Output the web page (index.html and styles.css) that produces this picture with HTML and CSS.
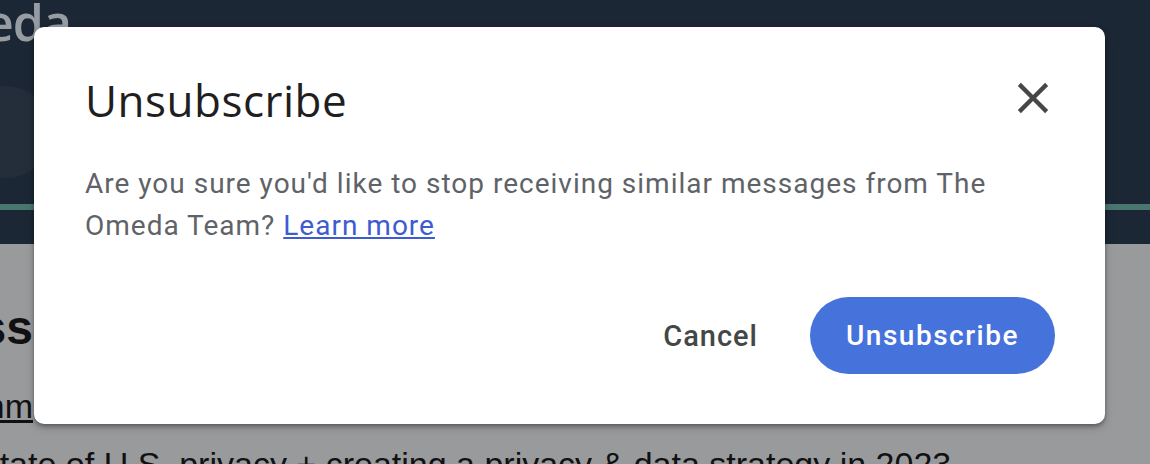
FILE: index.html
```html
<!DOCTYPE html>
<html>
<head>
<meta charset="utf-8">
<link rel="stylesheet" href="styles.css">
</head>
<body>
<div class="page">
  <header class="top">
    <div class="logo">Omeda</div>
    <div class="avatar"></div>
    <div class="accent"></div>
  </header>
  <main class="content">
    <div class="clip headline"><span>Access</span></div>
    <div class="clip link"><a>Summ</a></div>
    <p class="lead">State of U.S. privacy + creating a privacy &amp; data strategy in 2023</p>
  </main>
</div>

<div class="dialog" role="dialog">
  <div class="dialog-head">
    <h1 class="dialog-title">Unsubscribe</h1>
    <button class="close" aria-label="Close">
      <svg viewBox="0 0 24 24"><path d="M19 6.41 17.59 5 12 10.59 6.41 5 5 6.41 10.59 12 5 17.59 6.41 19 12 13.41 17.59 19 19 17.59 13.41 12z" fill="#474747"/></svg>
    </button>
  </div>
  <p class="dialog-text">Are you sure you'd like to stop receiving similar messages from The Omeda Team? <a class="learn">Learn more</a></p>
  <div class="dialog-actions">
    <button class="btn-text">Cancel</button>
    <button class="btn-primary">Unsubscribe</button>
  </div>
</div>
</body>
</html>
```
FILE: styles.css
```css
html, body {
  margin: 0;
  padding: 0;
}
body {
  width: 1150px;
  height: 464px;
  overflow: hidden;
  background: #999a9c;
  font-family: Roboto, "Liberation Sans", sans-serif;
  position: relative;
}
.page {
  display: flex;
  flex-direction: column;
}
.top {
  height: 244px;
  background: #1c2735;
  position: relative;
  overflow: hidden;
}
.logo {
  position: absolute;
  left: -100px;
  top: -12px;
  font-family: "Open Sans", sans-serif;
  font-weight: 600;
  font-size: 50px;
  color: #979ca2;
  letter-spacing: -1px;
}
.avatar {
  position: absolute;
  left: -40px;
  top: 86px;
  width: 92px;
  height: 92px;
  border-radius: 50%;
  background: #242e3a;
}
.accent {
  position: absolute;
  left: 0;
  right: 0;
  top: 204px;
  height: 6px;
  background: #4a7670;
}
.content {
  color: #111;
  font-family: "Liberation Sans", Arial, sans-serif;
  display: flex;
  flex-direction: column;
}
.clip {
  width: 33px;
  display: flex;
  justify-content: flex-end;
  white-space: nowrap;
}
.headline {
  margin-top: 60px;
  font-size: 48px;
  line-height: 48px;
  font-weight: 700;
}
.link {
  margin-top: 34px;
  font-size: 34px;
  line-height: 40px;
}
.link a {
  text-decoration: underline;
}
.lead {
  margin: 18px 0 0 -23px;
  font-size: 34px;
  line-height: 40px;
  white-space: nowrap;
}
.dialog {
  position: absolute;
  left: 34px;
  top: 27px;
  width: 1071px;
  height: 397px;
  box-sizing: border-box;
  background: #fff;
  border-radius: 10px;
  box-shadow: 0 2px 4px rgba(0,0,0,0.35), 0 4px 10px rgba(0,0,0,0.15);
  padding: 45px 50px 0 51px;
  display: flex;
  flex-direction: column;
}
.dialog-head {
  display: flex;
  align-items: center;
  justify-content: space-between;
}
.dialog-title {
  margin: 0;
  font-family: "Open Sans", Roboto, sans-serif;
  font-weight: 400;
  font-size: 44px;
  line-height: 56px;
  color: #1f1f1f;
  letter-spacing: 0.5px;
}
.close {
  border: 0;
  background: none;
  padding: 0;
  margin: 0 -4px 4px 0;
  width: 52px;
  height: 52px;
  display: flex;
  align-items: center;
  justify-content: center;
}
.close svg {
  width: 52px;
  height: 52px;
}
.dialog-text {
  margin: 35px 0 0 0;
  font-size: 28px;
  line-height: 42px;
  letter-spacing: 1px;
  color: #5f6368;
  width: 950px;
}
.learn {
  color: #3c5ccf;
  text-decoration: underline;
}
.dialog-actions {
  display: flex;
  justify-content: flex-end;
  align-items: center;
  gap: 52px;
  margin-top: 50px;
}
.btn-text {
  border: 0;
  background: none;
  font-family: Roboto, sans-serif;
  font-weight: 500;
  font-size: 29px;
  letter-spacing: 1px;
  color: #444746;
  padding: 0;
}
.btn-primary {
  border: 0;
  background: #4672db;
  color: #fff;
  font-family: Roboto, sans-serif;
  font-weight: 500;
  font-size: 28px;
  letter-spacing: 1.5px;
  height: 77px;
  width: 245px;
  border-radius: 39px;
  padding: 0;
}
```
